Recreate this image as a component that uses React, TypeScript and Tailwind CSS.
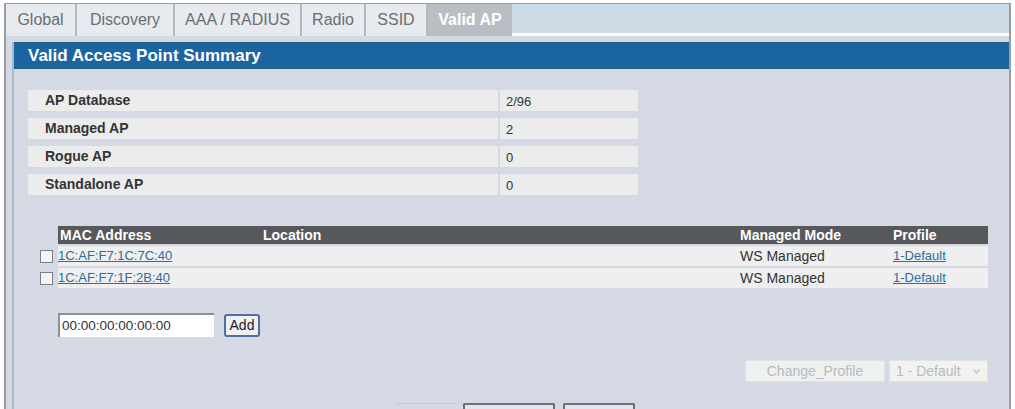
import React from "react";

const tabs = [
  { label: "Global", w: "w-[71px]" },
  { label: "Discovery", w: "w-[98px]" },
  { label: "AAA / RADIUS", w: "w-[127px]" },
  { label: "Radio", w: "w-[64px]" },
  { label: "SSID", w: "w-[62px]" },
];

const summary = [
  { label: "AP Database", value: "2/96" },
  { label: "Managed AP", value: "2" },
  { label: "Rogue AP", value: "0" },
  { label: "Standalone AP", value: "0" },
];

const aps = [
  { mac: "1C:AF:F7:1C:7C:40", mode: "WS Managed", profile: "1-Default" },
  { mac: "1C:AF:F7:1F:2B:40", mode: "WS Managed", profile: "1-Default" },
];

export default function App() {
  return (
    <div
      className="w-[1015px] h-[409px] bg-white overflow-hidden pt-[3px] pl-[4px]"
      style={{ fontFamily: '"Liberation Sans", Arial, sans-serif' }}
    >
      <div className="w-[1007px] h-[406px] border-l-2 border-r-2 border-t border-[#9a9da3] bg-[#d4d9e3] flex flex-col">
        {/* tab bar */}
        <div className="h-[34px] flex bg-[#cddbe6]">
          {tabs.map((t) => (
            <div
              key={t.label}
              className={`${t.w} h-full flex items-center justify-center bg-[#e7eaee] border-r-2 border-[#b4b8bd] text-[16px] text-[#6b6e72]`}
            >
              {t.label}
            </div>
          ))}
          <div className="w-[84px] h-full flex items-center justify-center bg-[#b9bec5] text-[16px] font-bold text-white">
            Valid AP
          </div>
          <div className="flex-1 border-b-[3px] border-white" />
        </div>

        {/* panel */}
        <div className="flex-1 ml-[6px] mt-[6px] border-l-2 border-[#a7b8cc] flex flex-col">
          <div className="h-[27px] bg-[#1b65a0] border-y border-[#28587f] flex items-center pl-[14px] text-[17px] font-bold text-white">
            Valid Access Point Summary
          </div>

          {/* summary */}
          <div className="ml-[14px] mt-[21px] flex flex-col gap-[7px]">
            {summary.map((s) => (
              <div key={s.label} className="flex gap-[2px] h-[21px]">
                <div className="w-[470px] bg-[#ececec] flex items-center pl-[17px] text-[14px] font-bold text-[#333]">
                  {s.label}
                </div>
                <div className="w-[138px] bg-[#ececec] flex items-center pl-[6px] pt-[3px] text-[13px] text-[#333]">
                  {s.value}
                </div>
              </div>
            ))}
          </div>

          {/* valid ap list */}
          <div className="ml-[24px] mt-[31px] w-[950px] flex flex-col">
            <div className="flex h-[18px]">
              <div className="w-[20px]" />
              <div className="w-[930px] bg-[#56585b] relative text-[14px] font-bold text-white leading-[18px]">
                <span className="absolute left-[2px]">MAC Address</span>
                <span className="absolute left-[205px]">Location</span>
                <span className="absolute left-[682px]">Managed Mode</span>
                <span className="absolute left-[835px]">Profile</span>
              </div>
            </div>
            {aps.map((a) => (
              <div key={a.mac} className="flex h-[20px] mt-[2px]">
                <div className="w-[20px] flex items-center">
                  <div className="w-[13px] h-[13px] ml-[2px] border border-[#7b7f86] bg-[#f4f4f4]" />
                </div>
                <div className="w-[930px] bg-[#efefef] relative text-[13px] leading-[20px]">
                  <span className="absolute left-0 text-[#2b6d9f] underline">{a.mac}</span>
                  <span className="absolute left-[682px] text-[14px] text-[#333]">{a.mode}</span>
                  <span className="absolute left-[835px] text-[#2b6d9f] underline">{a.profile}</span>
                </div>
              </div>
            ))}
          </div>

          {/* add row */}
          <div className="ml-[44px] mt-[25px] flex items-center gap-[10px]">
            <div className="w-[156px] h-[24px] bg-white border-t-2 border-l-2 border-[#8d9096] flex items-center pl-[2px] text-[13.5px] text-[#333]">
              00:00:00:00:00:00
            </div>
            <div className="w-[36px] h-[23px] bg-[#eef0f4] border-2 border-[#4f6fa0] rounded-[3px] flex items-center justify-center text-[14px] text-[#222]">
              Add
            </div>
          </div>

          {/* change profile */}
          <div className="mt-[23px] ml-[731px] flex gap-[4px] h-[22px]">
            <div className="w-[140px] bg-[#eff0f0] border border-[#e0e2e4] flex items-center justify-center text-[14px] text-[#b8babd]">
              Change_Profile
            </div>
            <div className="w-[99px] bg-[#f2f3ef] border border-[#e0e2e4] flex items-center pl-[6px] text-[14px] text-[#b8babd]">
              1 - Default
              <svg className="ml-auto mr-[7px]" width="7" height="5" viewBox="0 0 7 5">
                <path d="M0.5 0.5 L3.5 4 L6.5 0.5" fill="none" stroke="#c0c2c5" strokeWidth="1.2" />
              </svg>
            </div>
          </div>

          {/* bottom buttons (cut off) */}
          <div className="mt-[21px] ml-[383px] flex gap-[8px] h-[6px]">
            <div className="w-[58px] border-t border-[#c4c8cf]" />
            <div className="w-[92px] border-t-2 border-x-2 border-[#6b717a] rounded-t-[2px] bg-[#e2e5ea]" />
            <div className="w-[72px] border-t-2 border-x-2 border-[#6b717a] rounded-t-[2px] bg-[#e2e5ea]" />
          </div>
        </div>
      </div>
    </div>
  );
}
